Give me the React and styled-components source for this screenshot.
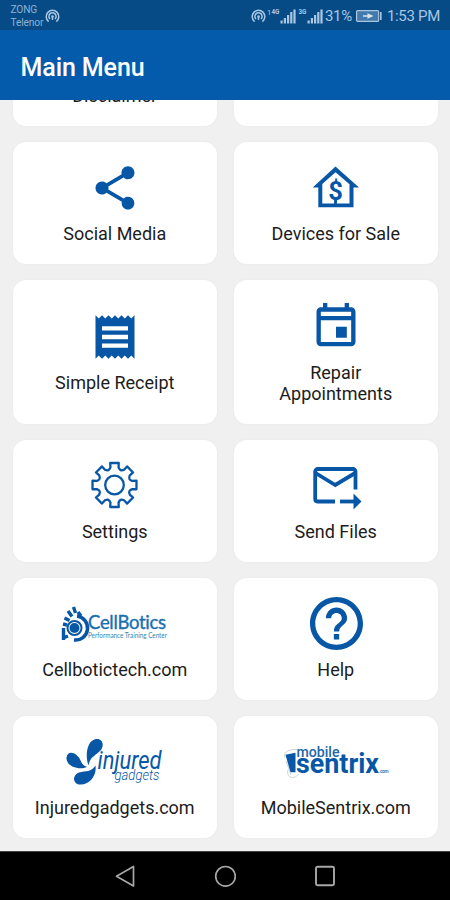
import React from 'react';
import styled, { createGlobalStyle } from 'styled-components';

const BLUE = '#0857a6';

const GlobalStyle = createGlobalStyle`
  body {
    margin: 0;
    font-family: Roboto, 'Liberation Sans', sans-serif;
  }
`

const Screen = styled.div`
  display: flex;
  flex-direction: column;
  width: 450px;
  height: 900px;
  overflow: hidden;
  background: #f0f0f0;
`

const StatusBar = styled.div`
  display: flex;
  align-items: center;
  justify-content: space-between;
  flex: none;
  box-sizing: border-box;
  height: 30px;
  padding: 2px 10px 0 10.5px;
  background: #064b86;
  color: #a9c6e2;
`

const StatusGroup = styled.div`
  display: flex;
  align-items: center;
  gap: ${props => props.$gap || 0}px;
`

const Carrier = styled.div`
  font-size: 10.2px;
  line-height: 13.4px;
  letter-spacing: -.15px;
  color: #8fb2d4;
`

const StatusText = styled.span`
  font-size: 15px;
  line-height: 28px;
  letter-spacing: -.3px;
`

const Header = styled.header`
  display: flex;
  align-items: center;
  flex: none;
  box-sizing: border-box;
  height: 70px;
  padding: 4px 20.5px 0;
  background: #045bab;
`

const Title = styled.h1`
  margin: 0;
  font-size: 25px;
  font-weight: 500;
  letter-spacing: -.1px;
  color: #fff;
`

const Content = styled.main`
  display: flex;
  flex-direction: column;
  justify-content: flex-end;
  gap: 16.5px;
  flex: 1;
  min-height: 0;
  overflow: hidden;
  padding: 0 12px 13.5px 13px;
`

const Row = styled.div`
  display: grid;
  grid-template-columns: 204px 204px;
  column-gap: 17px;
  flex: none;
`

const Card = styled.div`
  display: flex;
  flex-direction: column;
  align-items: center;
  justify-content: center;
  gap: 9.5px;
  box-sizing: border-box;
  height: ${props => (props.$tall ? 143.5 : 121.5)}px;
  border-radius: 13px;
  background: #fff;
  box-shadow: 0 0 3px rgba(0, 0, 0, .04);
`

const IconSlot = styled.div`
  display: flex;
  align-items: center;
  justify-content: center;
  height: 52px;

  svg {
    display: block;
    flex: none;
  }
`

const Label = styled.div`
  max-width: 165px;
  min-height: 21px;
  padding-right: .5px;
  font-size: 18px;
  line-height: 21px;
  text-align: center;
  color: #1c1c1c;
`

const NavBar = styled.nav`
  display: flex;
  align-items: center;
  justify-content: center;
  gap: 78px;
  flex: none;
  box-sizing: border-box;
  height: 49px;
  border-top: 1px solid #444;
  background: #000;
`

const Hotspot = () => (
  <svg width="15" height="14" viewBox="0 0 15 14" fill="none" stroke="currentColor" strokeWidth="1.5">
    <path d="M3.6 12.6a6.3 6.3 0 1 1 7.8 0" />
    <path d="M5 10a3.6 3.6 0 1 1 5 0" />
    <circle cx="7.5" cy="7.6" r="1.3" fill="currentColor" stroke="none" />
    <path d="M7.5 8v3" />
  </svg>
);

const Signal = ({ kind, sim }) => (
  <svg width={sim ? 29 : 25} height="15" viewBox={sim ? '-5 0 29 15' : '-1 0 25 15'} fill="currentColor">
    {sim && <text x="-5" y="6" fontSize="7.5">{sim}</text>}
    <text x="-0.5" y="5.2" fontSize="6.3" fontWeight="700">{kind}</text>
    <rect x="8.5" y="11.5" width="2.2" height="3" />
    <rect x="11.8" y="9" width="2.2" height="5.5" />
    <rect x="15" y="6" width="2.2" height="8.5" />
    <rect x="18.2" y="3" width="2.2" height="11.5" />
    <rect x="21.4" y="0.5" width="2.2" height="14" />
  </svg>
);

const Battery = () => (
  <svg width="26" height="12" viewBox="0 0 26 12">
    <rect x="0.6" y="0.6" width="22" height="10.8" rx="1" fill="#4379ab" stroke="currentColor" strokeWidth="1.2" />
    <rect x="24" y="2" width="1.6" height="8" fill="currentColor" />
    <path d="M7 5.2h4.5V3.2L17.5 6l-6 2.8V6.8H7z" fill="#d5e5f3" />
  </svg>
);

// 24-unit material glyph
const Glyph = ({ d, size = 52, viewBox = '0 0 24 24' }) => (
  <svg width={size} height={size} viewBox={viewBox} fill={BLUE}>
    <path d={d} />
  </svg>
);

const ShareIcon = () => (
  <Glyph d="M18 16.080c-.76 0-1.440.3-1.960.77L8.910 12.700c.05-.23.09-.46.09-.7s-.04-.47-.09-.7l7.050-4.110c.54.5 1.250.81 2.040.81 1.660 0 3-1.340 3-3s-1.340-3-3-3-3 1.340-3 3c0 .24.04.47.09.7L8.040 9.810C7.500 9.310 6.790 9 6 9c-1.660 0-3 1.340-3 3s1.340 3 3 3c.79 0 1.500-.31 2.040-.81l7.120 4.160c-.05.21-.08.43-.08.65 0 1.610 1.310 2.920 2.920 2.920s2.920-1.310 2.920-2.920-1.310-2.920-2.920-2.920z" />
);

const ReceiptIcon = () => (
  <Glyph d="M18 17H6v-2h12v2zm0-4H6v-2h12v2zm0-4H6V7h12v2zM3 22l1.500-1.500L6 22l1.500-1.500L9 22l1.500-1.500L12 22l1.500-1.500L15 22l1.500-1.500L18 22l1.500-1.500L21 22V2l-1.500 1.500L18 2l-1.500 1.500L15 2l-1.500 1.500L12 2l-1.500 1.500L9 2 7.500 3.500 6 2 4.500 3.500 3 2v20z" />
);

const CalendarIcon = () => (
  <Glyph
    viewBox="0 -0.400 24 24"
    d="M12 12h5v5h-5zM19 3h-1V1h-2v2H8V1H6v2H5c-1.110 0-2 .9-2 2v14c0 1.100.89 2 2 2h14c1.100 0 2-.9 2-2V5c0-1.100-.9-2-2-2zm0 2v2H5V5h14zM5 19V9h14v10H5z"
  />
);

const HelpIcon = () => (
  <Glyph
    size={53}
    viewBox="2 2 20 20"
    d="M11 18h2v-2h-2v2zm1-16C6.480 2 2 6.480 2 12s4.480 10 10 10 10-4.480 10-10S17.520 2 12 2zm0 18c-4.410 0-8-3.590-8-8s3.590-8 8-8 8 3.590 8 8-3.590 8-8 8zm0-14c-2.210 0-4 1.790-4 4h2c0-1.100.9-2 2-2s2 .9 2 2c0 2-3 1.750-3 5h2c0-2.250 3-2.500 3-5 0-2.210-1.790-4-4-4z"
  />
);

const HouseIcon = () => (
  <svg width="52" height="52" viewBox="0 0 52 52">
    <path
      d="M25.5 4.500 49 25.400H43.500V45.300H8.300V25.400H2.700zM25.500 10.200 12.300 22V41.400H39.500V22.300z"
      fill={BLUE}
      fillRule="evenodd"
    />
    <text x="25.5" y="37.8" textAnchor="middle" fontSize="25.5" fontWeight="700" fill={BLUE}>$</text>
    <path d="M25.5 37v6" stroke={BLUE} strokeWidth="2.8" />
  </svg>
);

// point on the gear outline, degrees run clockwise from the top
const gearPoint = (r, deg) => {
  const a = (deg * Math.PI) / 180;
  return `${(25.5 + r * Math.sin(a)).toFixed(2)} ${(25 - r * Math.cos(a)).toFixed(2)}`;
};

const GearIcon = () => {
  let d = '';
  for (let i = 0; i < 8; i++) {
    const c = i * 45;
    d += `${i ? 'L' : 'M'}${gearPoint(18, c - 13)}L${gearPoint(22.4, c - 11)}L${gearPoint(22.4, c + 11)}L${gearPoint(18, c + 13)}`;
    d += `Q${gearPoint(14.5, c + 22.5)} ${gearPoint(18, c + 32)}`;
  }
  return (
    <svg width="52" height="52" viewBox="0 0 52 52" fill="none" stroke={BLUE} strokeWidth="2.3" strokeLinejoin="round">
      <path d={`${d}Z`} />
      <circle cx="25.5" cy="25" r="9.3" />
    </svg>
  );
};

const MailIcon = () => (
  <svg width="52" height="52" viewBox="0 -1 52 52" fill="none" stroke={BLUE} strokeWidth="3.8">
    <path d="M25 40.500H7.500A2.500 2.500 0 0 1 5.200 38V10.500A2.500 2.500 0 0 1 7.700 8H43a2.500 2.500 0 0 1 2.500 2.500V28.500" />
    <path d="M5.500 12 25.300 24 45.200 12" />
    <path d="M30 40.500H45" />
    <path d="M43.500 32.500 51.500 40.500 43.500 48.500z" fill={BLUE} stroke="none" />
  </svg>
);

const CellboticsLogo = () => (
  <svg width="110" height="52" viewBox="0 0 110 52">
    <g fill="none" stroke={BLUE}>
      <circle cx="14.5" cy="30" r="7" strokeWidth="2" />
      <path d="M17 18A12 12 0 0 1 14 42" strokeWidth="3.5" />
      <path d="M4.500 20l5 2.500M8 13l4 5.500M13.500 9l2 6M3 26l4 1M18 14l3 4M3.500 30v12M3 40l5-2" strokeWidth="3.4" />
    </g>
    <circle cx="14.5" cy="30" r="5" fill={BLUE} />
    <text
      x="28"
      y="30.9"
      fontFamily="Lato, sans-serif"
      fontSize="18.5"
      textLength="78"
      fill="#176fb2"
      stroke="#176fb2"
      strokeWidth=".35"
      style={{ fontVariantLigatures: 'none' }}
    >
      CellBotics
    </text>
    <text
      x="28"
      y="40.2"
      fontFamily="Lato, sans-serif"
      fontSize="7"
      textLength="79"
      lengthAdjust="spacingAndGlyphs"
      fill="#2f87ad"
    >
      Performance Training Center
    </text>
  </svg>
);

const InjuredLogo = () => (
  <svg width="110" height="52" viewBox="0 -0.5 110 52">
    <g fill={BLUE}>
      <path d="M28.500 29C25 20 26.500 4 36 2.500C43 1.800 44.500 9 40.500 14C36 19 30 20 28.500 29z" />
      <path d="M27 30.500C19 34 6 30 6.500 21C7 15.500 12.500 15 16.500 18.500C22 23 20 28 27 30.500z" />
      <path d="M35.500 29C37 40 29 49 18.500 48C12 46 13 38 19 36C26 34 31 36 35.500 29z" />
    </g>
    <g fontStyle="italic" fill={BLUE}>
      <text x="37.5" y="32.8" fontSize="25" textLength="64" lengthAdjust="spacingAndGlyphs">injured</text>
      <text x="54.5" y="43" fontSize="15" fontWeight="300" textLength="45" lengthAdjust="spacingAndGlyphs">gadgets</text>
    </g>
  </svg>
);

const SentrixLogo = () => (
  <svg width="110" height="52" viewBox="0 -0.8 110 52">
    <g fill="none" stroke="#b9c6ce" strokeWidth="0.8">
      <path d="M4 21C2 15 8 12 16 13" />
      <path d="M7 33C5 40 12 44 18 37" />
      <path d="M5 24l5 14" />
    </g>
    <path d="M4.500 18 14.500 16V35.500H9.500z" fill={BLUE} />
    <text x="15.5" y="20" fontSize="14.5" fontWeight="500" textLength="43" lengthAdjust="spacingAndGlyphs" fill="#2567a8">mobile</text>
    <text x="15" y="35.8" fontSize="27" fontWeight="700" textLength="83" lengthAdjust="spacingAndGlyphs" fill={BLUE}>sentrix</text>
    <text x="98" y="35.8" fontSize="5" fontWeight="700" textLength="9.5" fill="#4b87bb">.com</text>
  </svg>
);

const rows = [
  { items: [{ label: 'Disclaimer' }, { label: '' }] },
  { items: [{ label: 'Social Media', icon: <ShareIcon /> }, { label: 'Devices for Sale', icon: <HouseIcon /> }] },
  { tall: true, items: [{ label: 'Simple Receipt', icon: <ReceiptIcon /> }, { label: 'Repair Appointments', icon: <CalendarIcon /> }] },
  { items: [{ label: 'Settings', icon: <GearIcon /> }, { label: 'Send Files', icon: <MailIcon /> }] },
  { items: [{ label: 'Cellbotictech.com', icon: <CellboticsLogo /> }, { label: 'Help', icon: <HelpIcon /> }] },
  { items: [{ label: 'Injuredgadgets.com', icon: <InjuredLogo /> }, { label: 'MobileSentrix.com', icon: <SentrixLogo /> }] },
];

const MenuCard = ({ label, icon, tall }) => (
  <Card $tall={tall}>
    <IconSlot>{icon}</IconSlot>
    <Label>{label}</Label>
  </Card>
);

const App = () => (
  <>
    <GlobalStyle />
    <Screen>
      <StatusBar>
        <StatusGroup $gap={2}>
          <Carrier>ZONG<br />Telenor</Carrier>
          <Hotspot />
        </StatusGroup>
        <StatusGroup $gap={1.8}>
          <Hotspot />
          <Signal kind="4G" sim="1" />
          <Signal kind="3G" />
          <StatusGroup $gap={4.5}>
            <StatusText>31%</StatusText>
            <Battery />
            <StatusText>1:53 PM</StatusText>
          </StatusGroup>
        </StatusGroup>
      </StatusBar>
      <Header>
        <Title>Main Menu</Title>
      </Header>
      <Content>
        {rows.map((row, i) => (
          <Row key={i}>
            {row.items.map((item, j) => (
              <MenuCard key={j} label={item.label} icon={item.icon} tall={row.tall} />
            ))}
          </Row>
        ))}
      </Content>
      <NavBar>
        <svg width="22" height="23" viewBox="0 0 22 23" fill="none" stroke="#a8a8a8" strokeWidth="1.7" strokeLinejoin="round">
          <path d="M19.500 1.500V21L2.500 11.300z" />
        </svg>
        <svg width="22" height="23" viewBox="0 0 22 23" fill="none" stroke="#a8a8a8" strokeWidth="1.7">
          <circle cx="11.5" cy="11.3" r="9.8" />
        </svg>
        <svg width="22" height="23" viewBox="0 0 22 23" fill="none" stroke="#a8a8a8" strokeWidth="1.9">
          <rect x="2" y="1.7" width="18" height="18.5" rx="1.5" />
        </svg>
      </NavBar>
    </Screen>
  </>
);

export default App;
